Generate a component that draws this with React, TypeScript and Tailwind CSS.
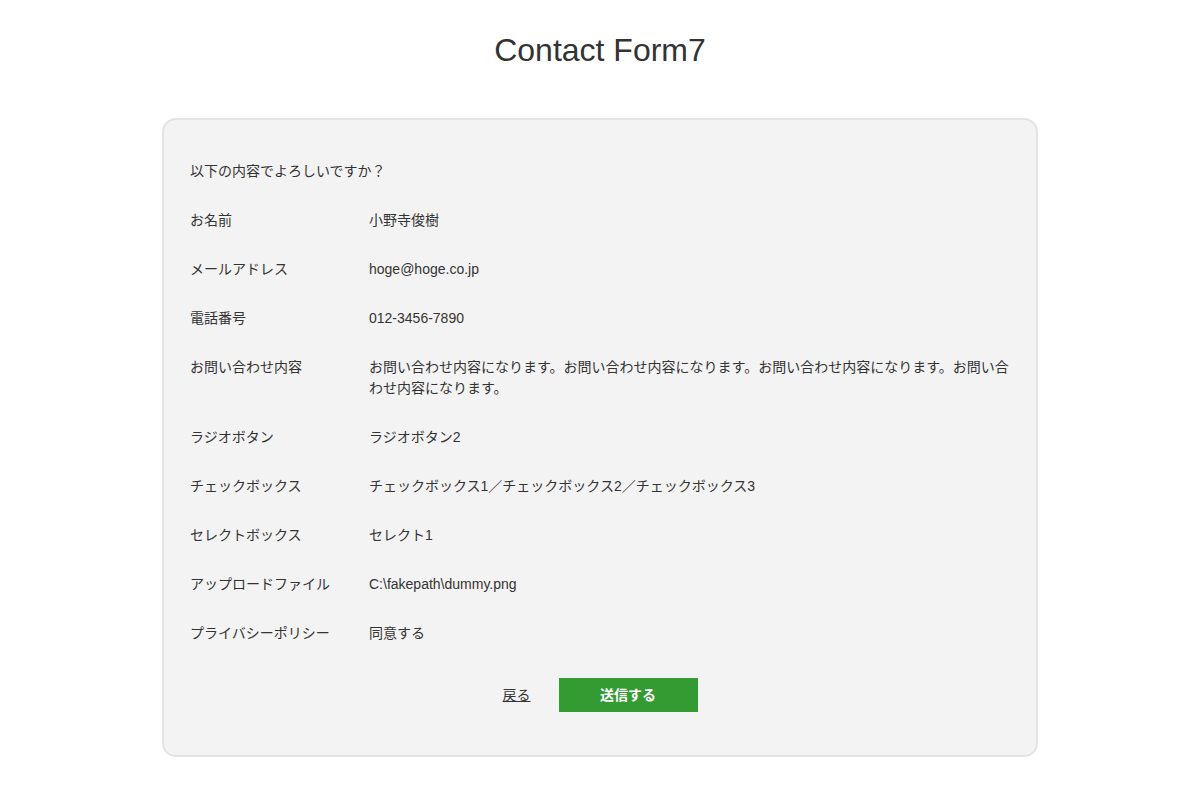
const rows: { label: string; value: string }[] = [
  { label: "お名前", value: "小野寺俊樹" },
  { label: "メールアドレス", value: "hoge@hoge.co.jp" },
  { label: "電話番号", value: "012-3456-7890" },
  {
    label: "お問い合わせ内容",
    value:
      "お問い合わせ内容になります。お問い合わせ内容になります。お問い合わせ内容になります。お問い合わせ内容になります。",
  },
  { label: "ラジオボタン", value: "ラジオボタン2" },
  { label: "チェックボックス", value: "チェックボックス1／チェックボックス2／チェックボックス3" },
  { label: "セレクトボックス", value: "セレクト1" },
  { label: "アップロードファイル", value: "C:\\fakepath\\dummy.png" },
  { label: "プライバシーポリシー", value: "同意する" },
];

export default function App() {
  return (
    <main
      className="min-h-screen bg-white text-[#333] pt-8"
      style={{ fontFamily: '"Liberation Sans", "Noto Sans CJK JP", sans-serif' }}
    >
      <h1 className="text-center text-[32px] leading-[36px] text-[#333]">Contact Form7</h1>

      <div className="mx-auto mt-[50px] w-[876px] rounded-[14px] border-2 border-[#e4e4e4] bg-[#f3f3f3] pt-[41px] pb-[43px] pl-[26px] pr-[20px]">
        <div className="flex flex-col gap-[28px] text-[14px] leading-[21px]">
          <p>以下の内容でよろしいですか？</p>
          {rows.map((row) => (
            <div key={row.label} className="flex">
              <div className="w-[179px] shrink-0">{row.label}</div>
              <div className="flex-1">{row.value}</div>
            </div>
          ))}
        </div>

        <div className="mt-[34px] flex items-center justify-center gap-[28px] pr-[6px]">
          <a href="#" className="text-[14px] underline text-[#333]">
            戻る
          </a>
          <button className="h-[34px] w-[139px] bg-[#349a32] text-[14px] font-bold text-white">
            送信する
          </button>
        </div>
      </div>
    </main>
  );
}
